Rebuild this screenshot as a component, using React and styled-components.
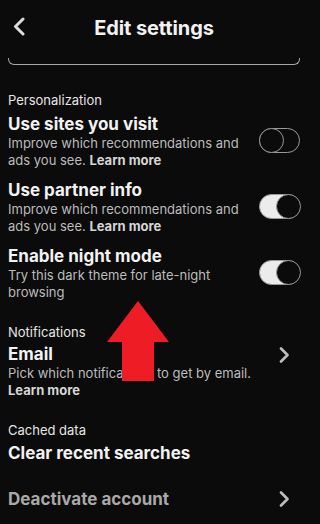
import React from "react";
import styled, { createGlobalStyle } from "styled-components";

const GlobalStyle = createGlobalStyle`
  html, body {
    margin: 0;
    padding: 0;
    background: #0b0b0b;
  }
  body {
    font-family: Inter, "Liberation Sans", sans-serif;
    color: #f0f0f0;
    -webkit-font-smoothing: antialiased;
  }
`;

const Screen = styled.div`
  position: relative;
  width: 320px;
  height: 524px;
  overflow: hidden;
  background: #0b0b0b;
`;

const Header = styled.div`
  height: 56px;
  display: flex;
  align-items: center;
  justify-content: center;
  padding-right: 12px;
  box-sizing: border-box;
  position: relative;
`;

const BackButton = styled.div`
  position: absolute;
  left: 12px;
  top: 17px;
  width: 14px;
  height: 19px;
`;

const Title = styled.h1`
  margin: 0;
  font-size: 20px;
  font-weight: 700;
  color: #f2f2f2;
  letter-spacing: -0.1px;
`;

const InputEdge = styled.div`
  margin: 2px 20px 0 8px;
  height: 6px;
  border: 1.5px solid #a8a8a8;
  border-top: none;
  border-radius: 0 0 6px 6px;
`;

const Content = styled.div`
  padding: 0 20px 0 8px;
`;

const SectionLabel = styled.div`
  font-size: 13px;
  color: #e6e6e6;
  margin-top: ${(p) => p.top}px;
  line-height: 17px;
`;

const Row = styled.div`
  display: flex;
  align-items: ${(p) => (p.center ? "center" : "flex-start")};
  justify-content: space-between;
  margin-top: ${(p) => p.top || 0}px;
`;

const RowText = styled.div`
  flex: 1;
  min-width: 0;
`;

const RowTitle = styled.div`
  font-size: 17px;
  font-weight: 700;
  line-height: 22px;
  color: ${(p) => (p.muted ? "#a9a9a9" : "#f2f2f2")};
`;

const RowDesc = styled.p`
  margin: 0;
  font-size: 13px;
  line-height: 17px;
  color: #bcbcbc;
  padding-right: ${(p) => p.pr || 0}px;

  b {
    font-weight: 700;
    color: #d6d6d6;
  }
`;

const ToggleTrack = styled.div`
  flex: 0 0 auto;
  width: 41px;
  height: 25px;
  box-sizing: border-box;
  border-radius: 13px;
  border: 1.5px solid #9a9a9a;
  background: ${(p) => (p.on ? "#ececec" : "transparent")};
  position: relative;
  margin-top: 15px;
`;

const ToggleKnob = styled.div`
  position: absolute;
  top: -1.5px;
  ${(p) => (p.on ? "right: -1.5px;" : "left: -1.5px;")}
  width: 25px;
  height: 25px;
  box-sizing: border-box;
  border-radius: 50%;
  border: 1.5px solid #9a9a9a;
  background: #0b0b0b;
`;

const Chevron = styled.svg`
  flex: 0 0 auto;
  width: 11px;
  height: 16px;
  margin-right: 10px;
  margin-top: ${(p) => p.top || 0}px;
`;

const Arrow = styled.svg`
  position: absolute;
  left: 107px;
  top: 301px;
  width: 63px;
  height: 81px;
`;

function Toggle({ on }) {
  return (
    <ToggleTrack on={on}>
      <ToggleKnob on={on} />
    </ToggleTrack>
  );
}

function ChevronRight({ top }) {
  return (
    <Chevron viewBox="0 0 11 16" top={top}>
      <path d="M2 1.5 L8.5 8 L2 14.5" fill="none" stroke="#bdbdbd" strokeWidth="2.6" strokeLinecap="round" strokeLinejoin="round" />
    </Chevron>
  );
}

export default function App() {
  return (
    <>
      <GlobalStyle />
      <Screen>
        <Header>
          <BackButton>
            <svg width="14" height="19" viewBox="0 0 14 19">
              <path d="M11 2 L3.5 9.5 L11 17" fill="none" stroke="#dcdcdc" strokeWidth="3" strokeLinecap="round" strokeLinejoin="round" />
            </svg>
          </BackButton>
          <Title>Edit settings</Title>
        </Header>
        <InputEdge />
        <Content>
          <SectionLabel top={27}>Personalization</SectionLabel>
          <Row top={4}>
            <RowText>
              <RowTitle>Use sites you visit</RowTitle>
              <RowDesc>
                Improve which recommendations and ads you see. <b>Learn more</b>
              </RowDesc>
            </RowText>
            <Toggle on={false} />
          </Row>
          <Row top={10}>
            <RowText>
              <RowTitle>Use partner info</RowTitle>
              <RowDesc>
                Improve which recommendations and ads you see. <b>Learn more</b>
              </RowDesc>
            </RowText>
            <Toggle on />
          </Row>
          <Row top={10}>
            <RowText>
              <RowTitle>Enable night mode</RowTitle>
              <RowDesc pr={10}>Try this dark theme for late-night browsing</RowDesc>
            </RowText>
            <Toggle on />
          </Row>

          <SectionLabel top={23}>Notifications</SectionLabel>
          <Row top={2}>
            <RowText>
              <RowTitle>Email</RowTitle>
              <RowDesc>
                Pick which notifications to get by email. <b>Learn more</b>
              </RowDesc>
            </RowText>
            <ChevronRight top={4} />
          </Row>

          <SectionLabel top={23}>Cached data</SectionLabel>
          <Row top={3}>
            <RowTitle>Clear recent searches</RowTitle>
          </Row>

          <Row top={24} center>
            <RowTitle muted>Deactivate account</RowTitle>
            <ChevronRight />
          </Row>
        </Content>
        <Arrow viewBox="0 0 63 81">
          <polygon points="31,0 62,41 47,41 47,80 15,80 15,41 0,41" fill="#ee1c25" />
        </Arrow>
      </Screen>
    </>
  );
}
